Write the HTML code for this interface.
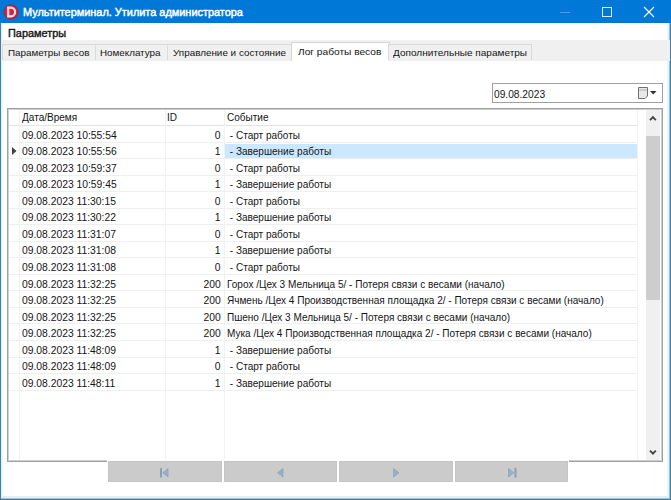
<!DOCTYPE html>
<html><head><meta charset="utf-8">
<style>
*{margin:0;padding:0;box-sizing:border-box}
html,body{width:671px;height:500px;overflow:hidden;background:#fff;font-family:"Liberation Sans",sans-serif;color:#141414}
.a{position:absolute;white-space:nowrap}
.s{font-size:10.0px;line-height:12px;transform-origin:0 0;-webkit-text-stroke:0px currentColor;white-space:pre}
#title{left:0;top:0;width:671px;height:23px;background:#0078d7}
#title .t{left:23px;top:6px;font-size:11px;line-height:13px;color:#fff;-webkit-text-stroke:0.45px #fff;transform:scaleX(0.992);transform-origin:0 0}
.tab{top:44px;height:16px;background:#f0f0f0;border:1px solid #dadada;border-bottom:none}
.tab.act{top:42px;height:19px;background:#fff;border-color:#d6d6d6}
#grid{left:7px;top:108px;width:656px;height:354px;border:1px solid #a0a0a0;box-shadow:inset 0 0 0 1px #cfcfcf;background:#fff}
.hl{height:1px;background:#ececec}
.vl{width:1px;background:#f2f2f2}
</style></head><body>
<div class="a" id="title">
  <svg class="a" style="left:3px;top:3.8px" width="16" height="16" viewBox="0 0 16 16">
    <circle cx="8" cy="8" r="7" fill="#d8213a" stroke="#b01828" stroke-width="0.8"/>
    <path d="M5.2 3.6 H8 A4.1 4.4 0 0 1 8 12.4 H5.2 Z" fill="none" stroke="#ffe0e6" stroke-width="2.2"/>
  </svg>
  <div class="a t">Мультитерминал. Утилита администратора</div>
  <div class="a" style="left:560px;top:12px;width:10px;height:1px;background:#4d9ee2"></div>
  <div class="a" style="left:602px;top:7px;width:10px;height:10px;border:1px solid #d8ecfb"></div>
  <svg class="a" style="left:643px;top:6px" width="12" height="12" viewBox="0 0 12 12">
    <path d="M1 1 L11 11 M11 1 L1 11" stroke="#fff" stroke-width="1.1"/>
  </svg>
</div>
<div class="a" style="left:2px;top:496px;width:666px;height:1px;background:#e6ecee"></div>
<div class="a" style="left:2px;top:497px;width:667px;height:1px;background:#dcf6ff"></div>
<div class="a" style="left:1px;top:498px;width:669px;height:1px;background:#9cc0d8"></div>
<div class="a" style="left:0px;top:499px;width:671px;height:1px;background:#477ca3"></div>
<div class="a" style="left:2px;top:23px;width:1px;height:474px;background:#f0fbff"></div>
<div class="a" style="left:1px;top:23px;width:1px;height:475px;background:#d8f4ff"></div>
<div class="a" style="left:0px;top:23px;width:1px;height:477px;background:#477ca3"></div>
<div class="a" style="left:667px;top:23px;width:1px;height:474px;background:#eef6fa"></div>
<div class="a" style="left:668px;top:23px;width:1px;height:475px;background:#dcf6ff"></div>
<div class="a" style="left:669px;top:23px;width:1px;height:476px;background:#9cc0d8"></div>
<div class="a" style="left:670px;top:23px;width:1px;height:477px;background:#477ca3"></div>
<div class="a s" style="left:7.8px;top:27.54px;transform:scaleX(1.09);font-size:10px;-webkit-text-stroke:0.4px #1e1e1e;">Параметры</div>
<div class="a" style="left:1px;top:40px;width:669px;height:21px;background:#f0f0f0"></div>
<div class="a tab" style="left:2px;width:94px"></div>
<div class="a tab" style="left:95px;width:74px"></div>
<div class="a tab" style="left:167px;width:126px"></div>
<div class="a tab act" style="left:291px;width:99px"></div>
<div class="a tab" style="left:388px;width:144px"></div>
<div class="a s" style="left:7.8px;top:47.27px;transform:scaleX(1.024);font-size:9.6px;">Параметры весов</div>
<div class="a s" style="left:100.3px;top:47.27px;transform:scaleX(1.023);font-size:9.6px;">Номеклатура</div>
<div class="a s" style="left:172.8px;top:47.27px;transform:scaleX(1.029);font-size:9.6px;">Управление и состояние</div>
<div class="a s" style="left:298.2px;top:46.47px;transform:scaleX(1.059);font-size:9.6px;">Лог работы весов</div>
<div class="a s" style="left:392.8px;top:47.27px;transform:scaleX(1.047);font-size:9.6px;">Дополнительные параметры</div>
<div class="a" style="left:492px;top:83px;width:171px;height:20px;border:1px solid #a0a0a0;background:#fff"></div>
<div class="a s" style="left:494.3px;top:88.53px;transform:scaleX(1.02);">09.08.2023</div>
<svg class="a" style="left:636px;top:86px" width="22" height="14" viewBox="0 0 22 14">
  <path d="M2.5 1.5 H11.5 V10 L9 12.5 H2.5 Z" fill="#e8e8e8" stroke="#707070" stroke-width="1"/>
  <path d="M3 4 H11" stroke="#b0b0b0" stroke-width="1"/>
  <path d="M14 5 L20.5 5 L17.25 8.5 Z" fill="#303030"/>
</svg>
<div class="a" id="grid"></div>
<div class="a hl" style="left:9px;top:125.0px;width:628px;background:#e3e3e3"></div>
<div class="a hl" style="left:9px;top:141.54px;width:628px;background:#efefef"></div>
<div class="a hl" style="left:9px;top:158.08px;width:628px;background:#efefef"></div>
<div class="a hl" style="left:9px;top:174.62px;width:628px;background:#efefef"></div>
<div class="a hl" style="left:9px;top:191.16px;width:628px;background:#efefef"></div>
<div class="a hl" style="left:9px;top:207.7px;width:628px;background:#efefef"></div>
<div class="a hl" style="left:9px;top:224.24px;width:628px;background:#efefef"></div>
<div class="a hl" style="left:9px;top:240.78px;width:628px;background:#efefef"></div>
<div class="a hl" style="left:9px;top:257.32px;width:628px;background:#efefef"></div>
<div class="a hl" style="left:9px;top:273.86px;width:628px;background:#efefef"></div>
<div class="a hl" style="left:9px;top:290.4px;width:628px;background:#efefef"></div>
<div class="a hl" style="left:9px;top:306.94px;width:628px;background:#efefef"></div>
<div class="a hl" style="left:9px;top:323.48px;width:628px;background:#efefef"></div>
<div class="a hl" style="left:9px;top:340.02px;width:628px;background:#efefef"></div>
<div class="a hl" style="left:9px;top:356.56px;width:628px;background:#efefef"></div>
<div class="a hl" style="left:9px;top:373.1px;width:628px;background:#efefef"></div>
<div class="a hl" style="left:9px;top:389.64px;width:628px;background:#efefef"></div>
<div class="a vl" style="left:19px;top:110px;height:350px"></div>
<div class="a vl" style="left:165px;top:110px;height:350px"></div>
<div class="a vl" style="left:224px;top:110px;height:350px"></div>
<div class="a vl" style="left:637px;top:110px;height:350px"></div>
<div class="a" style="left:225px;top:143.54px;width:412px;height:14px;background:#cce8ff"></div>
<svg class="a" style="left:11px;top:145.54px" width="7" height="10" viewBox="0 0 7 10"><path d="M1 1 L5.5 5 L1 9 Z" fill="#404040"/></svg>
<div class="a s" style="left:21.6px;top:111.53px;transform:scaleX(1.003);">Дата/Время</div>
<div class="a s" style="left:167.4px;top:111.53px;transform:scaleX(1.003);">ID</div>
<div class="a s" style="left:226.6px;top:111.53px;transform:scaleX(1.003);">Событие</div>
<div class="a s" style="left:21.6px;top:129.63px;transform:scaleX(1.032);">09.08.2023 10:55:54</div>
<div class="a s" style="right:450.0px;top:129.63px;transform:scaleX(1.032);transform-origin:100% 0">0</div>
<div class="a s" style="left:226.6px;top:129.63px;transform:scaleX(1.003);"> - Старт работы</div>
<div class="a s" style="left:21.6px;top:146.17px;transform:scaleX(1.032);">09.08.2023 10:55:56</div>
<div class="a s" style="right:450.0px;top:146.17px;transform:scaleX(1.032);transform-origin:100% 0">1</div>
<div class="a s" style="left:226.6px;top:146.17px;transform:scaleX(1.003);"> - Завершение работы</div>
<div class="a s" style="left:21.6px;top:162.71px;transform:scaleX(1.032);">09.08.2023 10:59:37</div>
<div class="a s" style="right:450.0px;top:162.71px;transform:scaleX(1.032);transform-origin:100% 0">0</div>
<div class="a s" style="left:226.6px;top:162.71px;transform:scaleX(1.003);"> - Старт работы</div>
<div class="a s" style="left:21.6px;top:179.25px;transform:scaleX(1.032);">09.08.2023 10:59:45</div>
<div class="a s" style="right:450.0px;top:179.25px;transform:scaleX(1.032);transform-origin:100% 0">1</div>
<div class="a s" style="left:226.6px;top:179.25px;transform:scaleX(1.003);"> - Завершение работы</div>
<div class="a s" style="left:21.6px;top:195.79px;transform:scaleX(1.032);">09.08.2023 11:30:15</div>
<div class="a s" style="right:450.0px;top:195.79px;transform:scaleX(1.032);transform-origin:100% 0">0</div>
<div class="a s" style="left:226.6px;top:195.79px;transform:scaleX(1.003);"> - Старт работы</div>
<div class="a s" style="left:21.6px;top:212.33px;transform:scaleX(1.032);">09.08.2023 11:30:22</div>
<div class="a s" style="right:450.0px;top:212.33px;transform:scaleX(1.032);transform-origin:100% 0">1</div>
<div class="a s" style="left:226.6px;top:212.33px;transform:scaleX(1.003);"> - Завершение работы</div>
<div class="a s" style="left:21.6px;top:228.88px;transform:scaleX(1.032);">09.08.2023 11:31:07</div>
<div class="a s" style="right:450.0px;top:228.88px;transform:scaleX(1.032);transform-origin:100% 0">0</div>
<div class="a s" style="left:226.6px;top:228.88px;transform:scaleX(1.003);"> - Старт работы</div>
<div class="a s" style="left:21.6px;top:245.41px;transform:scaleX(1.032);">09.08.2023 11:31:08</div>
<div class="a s" style="right:450.0px;top:245.41px;transform:scaleX(1.032);transform-origin:100% 0">1</div>
<div class="a s" style="left:226.6px;top:245.41px;transform:scaleX(1.003);"> - Завершение работы</div>
<div class="a s" style="left:21.6px;top:261.96px;transform:scaleX(1.032);">09.08.2023 11:31:08</div>
<div class="a s" style="right:450.0px;top:261.96px;transform:scaleX(1.032);transform-origin:100% 0">0</div>
<div class="a s" style="left:226.6px;top:261.96px;transform:scaleX(1.003);"> - Старт работы</div>
<div class="a s" style="left:21.6px;top:278.5px;transform:scaleX(1.032);">09.08.2023 11:32:25</div>
<div class="a s" style="right:450.0px;top:278.5px;transform:scaleX(1.032);transform-origin:100% 0">200</div>
<div class="a s" style="left:226.6px;top:278.5px;transform:scaleX(1.003);">Горох /Цех 3 Мельница 5/ - Потеря связи с весами (начало)</div>
<div class="a s" style="left:21.6px;top:295.04px;transform:scaleX(1.032);">09.08.2023 11:32:25</div>
<div class="a s" style="right:450.0px;top:295.04px;transform:scaleX(1.032);transform-origin:100% 0">200</div>
<div class="a s" style="left:226.6px;top:295.04px;transform:scaleX(1.003);">Ячмень /Цех 4 Производственная площадка 2/ - Потеря связи с весами (начало)</div>
<div class="a s" style="left:21.6px;top:311.58px;transform:scaleX(1.032);">09.08.2023 11:32:25</div>
<div class="a s" style="right:450.0px;top:311.58px;transform:scaleX(1.032);transform-origin:100% 0">200</div>
<div class="a s" style="left:226.6px;top:311.58px;transform:scaleX(1.003);">Пшено /Цех 3 Мельница 5/ - Потеря связи с весами (начало)</div>
<div class="a s" style="left:21.6px;top:328.12px;transform:scaleX(1.032);">09.08.2023 11:32:25</div>
<div class="a s" style="right:450.0px;top:328.12px;transform:scaleX(1.032);transform-origin:100% 0">200</div>
<div class="a s" style="left:226.6px;top:328.12px;transform:scaleX(1.003);">Мука /Цех 4 Производственная площадка 2/ - Потеря связи с весами (начало)</div>
<div class="a s" style="left:21.6px;top:344.66px;transform:scaleX(1.032);">09.08.2023 11:48:09</div>
<div class="a s" style="right:450.0px;top:344.66px;transform:scaleX(1.032);transform-origin:100% 0">1</div>
<div class="a s" style="left:226.6px;top:344.66px;transform:scaleX(1.003);"> - Завершение работы</div>
<div class="a s" style="left:21.6px;top:361.2px;transform:scaleX(1.032);">09.08.2023 11:48:09</div>
<div class="a s" style="right:450.0px;top:361.2px;transform:scaleX(1.032);transform-origin:100% 0">0</div>
<div class="a s" style="left:226.6px;top:361.2px;transform:scaleX(1.003);"> - Старт работы</div>
<div class="a s" style="left:21.6px;top:377.74px;transform:scaleX(1.032);">09.08.2023 11:48:11</div>
<div class="a s" style="right:450.0px;top:377.74px;transform:scaleX(1.032);transform-origin:100% 0">1</div>
<div class="a s" style="left:226.6px;top:377.74px;transform:scaleX(1.003);"> - Завершение работы</div>
<div class="a" style="left:646px;top:110px;width:14px;height:350px;background:#f0f0f0"></div>
<div class="a" style="left:646px;top:136px;width:14px;height:164px;background:#cdcdcd"></div>
<svg class="a" style="left:649px;top:115px" width="8" height="7" viewBox="0 0 8 7"><path d="M1 5.2 L3.9 2.2 L6.8 5.2" fill="none" stroke="#454545" stroke-width="1.9"/></svg>
<svg class="a" style="left:649px;top:449px" width="8" height="7" viewBox="0 0 8 7"><path d="M1 1.6 L3.9 4.6 L6.8 1.6" fill="none" stroke="#454545" stroke-width="1.9"/></svg>
<div class="a" style="left:107px;top:459px;width:462px;height:3px;background:#fff"></div>
<div class="a" style="left:108px;top:461px;width:114px;height:21px;background:#cbcbcb;border:1px solid #c4c4c4"></div>
<svg class="a" style="left:160px;top:467.5px" width="10" height="10" viewBox="0 0 10 10"><rect x="0" y="0" width="2" height="9.5" fill="#889fb6"/><path d="M2.8 4.75 L8 0.6 V8.9 Z" fill="#9ab0c6" stroke="#8ca3bb" stroke-width="0.8"/></svg>
<div class="a" style="left:224px;top:461px;width:113px;height:21px;background:#cbcbcb;border:1px solid #c4c4c4"></div>
<svg class="a" style="left:277px;top:467.5px" width="10" height="10" viewBox="0 0 10 10"><path d="M0.6 4.75 L6 0.6 V8.9 Z" fill="#9ab0c6" stroke="#8ca3bb" stroke-width="0.8"/></svg>
<div class="a" style="left:339px;top:461px;width:114px;height:21px;background:#cbcbcb;border:1px solid #c4c4c4"></div>
<svg class="a" style="left:393px;top:467.5px" width="10" height="10" viewBox="0 0 10 10"><path d="M0.6 0.6 L6 4.75 L0.6 8.9 Z" fill="#9ab0c6" stroke="#8ca3bb" stroke-width="0.8"/></svg>
<div class="a" style="left:455px;top:461px;width:113px;height:21px;background:#cbcbcb;border:1px solid #c4c4c4"></div>
<svg class="a" style="left:508px;top:467.5px" width="10" height="10" viewBox="0 0 10 10"><path d="M0.6 0.6 L5.8 4.75 L0.6 8.9 Z" fill="#9ab0c6" stroke="#8ca3bb" stroke-width="0.8"/><rect x="6.5" y="0" width="2" height="9.5" fill="#889fb6"/></svg>
</body></html>
